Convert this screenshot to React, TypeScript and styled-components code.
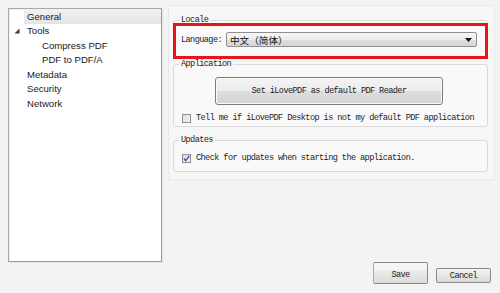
import React from "react";
import styled, { createGlobalStyle } from "styled-components";

const Global = createGlobalStyle`
  html, body { margin: 0; padding: 0; background: #f3f3f3; }
  body { width: 500px; height: 293px; overflow: hidden; }
`;

const Window = styled.div`
  width: 500px;
  height: 293px;
  background: #f3f3f3;
  display: flex;
  flex-direction: column;
`;

const Main = styled.div`
  display: flex;
  align-items: flex-start;
  height: 262px;
  padding: 5px 0 0 8px;
  box-sizing: border-box;
`;

const Sidebar = styled.div`
  margin-top: 3px;
  width: 154px;
  height: 254px;
  box-sizing: border-box;
  background: #ffffff;
  border: 1px solid #a9a9a9;
  border-right-color: #9c9c9c;
  border-bottom-color: #9c9c9c;
  box-shadow: 1px 1px 0 #e4e4e4, inset 1px 1px 0 #f0f0f0;
  font-family: "Liberation Sans", Arial, sans-serif;
  font-size: 9.6px;
  color: #1a1a1a;
`;

const Row = styled.div`
  display: flex;
  height: 14.5px;
  align-items: stretch;
`;

const Expander = styled.div`
  width: 15px;
  flex: none;
  display: flex;
  align-items: center;
  justify-content: center;
`;

const Label = styled.div<{ $level: number; $selected?: boolean }>`
  flex: 1;
  display: flex;
  align-items: center;
  padding-left: ${(p) => 3 + p.$level * 15}px;
  background: ${(p) =>
    p.$selected ? "linear-gradient(#f2f2f2, #e4e4e4)" : "transparent"};
`;

const Right = styled.div`
  margin-left: 6px;
  width: 327px;
  height: 175px;
  box-sizing: border-box;
  border: 1px solid #e9e9e9;
  background: #f6f6f6;
  padding: 9px 6px 0 4px;
  font-family: "Liberation Mono", "Courier New", monospace;
  font-size: 8.6px;
  letter-spacing: -0.6px;
  color: #1e1e1e;
`;

const Group = styled.fieldset<{ $mt: number; $pt: number; $pb: number }>`
  position: relative;
  margin: ${(p) => p.$mt}px 0 0 0;
  padding: ${(p) => p.$pt}px 10px ${(p) => p.$pb}px 7px;
  border: 1px solid #dadada;
  border-radius: 3px;
  background: #f9f9f9;
  min-width: 0;
`;

const Legend = styled.legend`
  padding: 0 2px;
  margin-left: -2px;
  line-height: 11px;
  color: #222;
`;

const Highlight = styled.div`
  position: absolute;
  left: -1px;
  right: -1px;
  top: -3px;
  bottom: -2px;
  border: 3px solid #e8131b;
  pointer-events: none;
`;

const FieldRow = styled.div`
  display: flex;
  align-items: center;
  gap: 4px;
  height: 15px;
`;

const Combo = styled.div`
  flex: 1;
  height: 15px;
  box-sizing: border-box;
  border: 1px solid #8f8f8f;
  border-radius: 2px;
  background: linear-gradient(#f7f7f7, #ececec 50%, #dfdfdf 51%, #d5d5d5);
  display: flex;
  align-items: center;
  padding: 0 4px 0 3px;
  font-family: "Noto Sans CJK SC", "Liberation Sans", sans-serif;
  font-size: 9.6px;
  letter-spacing: 0;
  color: #111;
`;

const ComboText = styled.span`
  flex: 1;
`;

const Center = styled.div`
  display: flex;
  justify-content: center;
`;

const BigButton = styled.div`
  width: 228px;
  height: 28px;
  box-sizing: border-box;
  border: 1px solid #7d7d7d;
  border-radius: 3px;
  background: linear-gradient(#f4f4f4, #ececec 50%, #dedede 51%, #d3d3d3);
  box-shadow: inset 0 0 0 1px #fbfbfb;
  display: flex;
  align-items: center;
  justify-content: center;
  color: #1a1a1a;
`;

const CheckRow = styled.div<{ $mt?: number }>`
  display: flex;
  align-items: center;
  gap: 5px;
  height: 12px;
  margin-top: ${(p) => p.$mt ?? 0}px;
  margin-left: 1px;
  white-space: nowrap;
`;

const Box = styled.span`
  width: 9px;
  height: 9px;
  flex: none;
  box-sizing: border-box;
  border: 1px solid #8e8f8f;
  background: linear-gradient(135deg, #dcdcdc, #f6f6f6);
  position: relative;
  display: inline-block;
`;

const Footer = styled.div`
  flex: 1;
  display: flex;
  justify-content: flex-end;
  align-items: flex-start;
  gap: 8px;
  padding-right: 9px;
  font-family: "Liberation Mono", "Courier New", monospace;
  font-size: 8.6px;
  letter-spacing: -0.6px;
  color: #1e1e1e;
`;

const Btn = styled.div<{ $primary?: boolean }>`
  box-sizing: border-box;
  width: 55px;
  height: ${(p) => (p.$primary ? 22 : 15)}px;
  margin-top: ${(p) => (p.$primary ? 0 : 6)}px;
  border: 1px solid #8a8a8a;
  border-radius: 2px;
  border-bottom-color: ${(p) => (p.$primary ? "#3d9be0" : "#8a8a8a")};
  border-left-color: ${(p) => (p.$primary ? "#6fb6ea" : "#8a8a8a")};
  background: ${(p) =>
    p.$primary
      ? "linear-gradient(#f4f4f4 0, #f4f4f4 35%, #ececec 36%, #dcdcdc)"
      : "linear-gradient(#f3f3f3, #e6e6e6 50%, #d9d9d9)"};
  display: flex;
  align-items: ${(p) => (p.$primary ? "flex-end" : "center")};
  padding-bottom: ${(p) => (p.$primary ? 3 : 0)}px;
  justify-content: center;
`;

const Arrow = () => (
  <svg width="7" height="4" viewBox="0 0 7 4">
    <polygon points="0,0 7,0 3.5,4" fill="#111" />
  </svg>
);

const TreeToggle = () => (
  <svg width="6" height="6" viewBox="0 0 6 6">
    <polygon points="5.5,0.5 5.5,5.5 0.5,5.5" fill="#3a3a3a" />
  </svg>
);

const Check = () => (
  <svg
    width="9"
    height="9"
    viewBox="0 0 9 9"
    style={{ position: "absolute", left: -1, top: -1 }}
  >
    <path d="M2 4.5 L3.8 6.6 L7.2 1.8" stroke="#3b4fc4" strokeWidth="1.4" fill="none" />
  </svg>
);

const tree = [
  { label: "General", level: 0, selected: true },
  { label: "Tools", level: 0, expander: true },
  { label: "Compress PDF", level: 1 },
  { label: "PDF to PDF/A", level: 1 },
  { label: "Metadata", level: 0 },
  { label: "Security", level: 0 },
  { label: "Network", level: 0 },
];

export default function App() {
  return (
    <Window>
      <Global />
      <Main>
        <Sidebar>
          {tree.map((t) => (
            <Row key={t.label}>
              <Expander>{t.expander ? <TreeToggle /> : null}</Expander>
              <Label $level={t.level} $selected={t.selected}>
                {t.label}
              </Label>
            </Row>
          ))}
        </Sidebar>
        <Right>
          <Group $mt={0} $pt={6} $pb={10}>
            <Legend>Locale</Legend>
            <FieldRow>
              <span>Language:</span>
              <Combo>
                <ComboText>中文（简体）</ComboText>
                <Arrow />
              </Combo>
            </FieldRow>
            <Highlight />
          </Group>
          <Group $mt={1} $pt={7} $pb={2}>
            <Legend>Application</Legend>
            <Center>
              <BigButton>Set iLovePDF as default PDF Reader</BigButton>
            </Center>
            <CheckRow $mt={7}>
              <Box />
              <span>Tell me if iLovePDF Desktop is not my default PDF application</span>
            </CheckRow>
          </Group>
          <Group $mt={8} $pt={6} $pb={7}>
            <Legend>Updates</Legend>
            <CheckRow>
              <Box>
                <Check />
              </Box>
              <span>Check for updates when starting the application.</span>
            </CheckRow>
          </Group>
        </Right>
      </Main>
      <Footer>
        <Btn $primary>Save</Btn>
        <Btn>Cancel</Btn>
      </Footer>
    </Window>
  );
}
